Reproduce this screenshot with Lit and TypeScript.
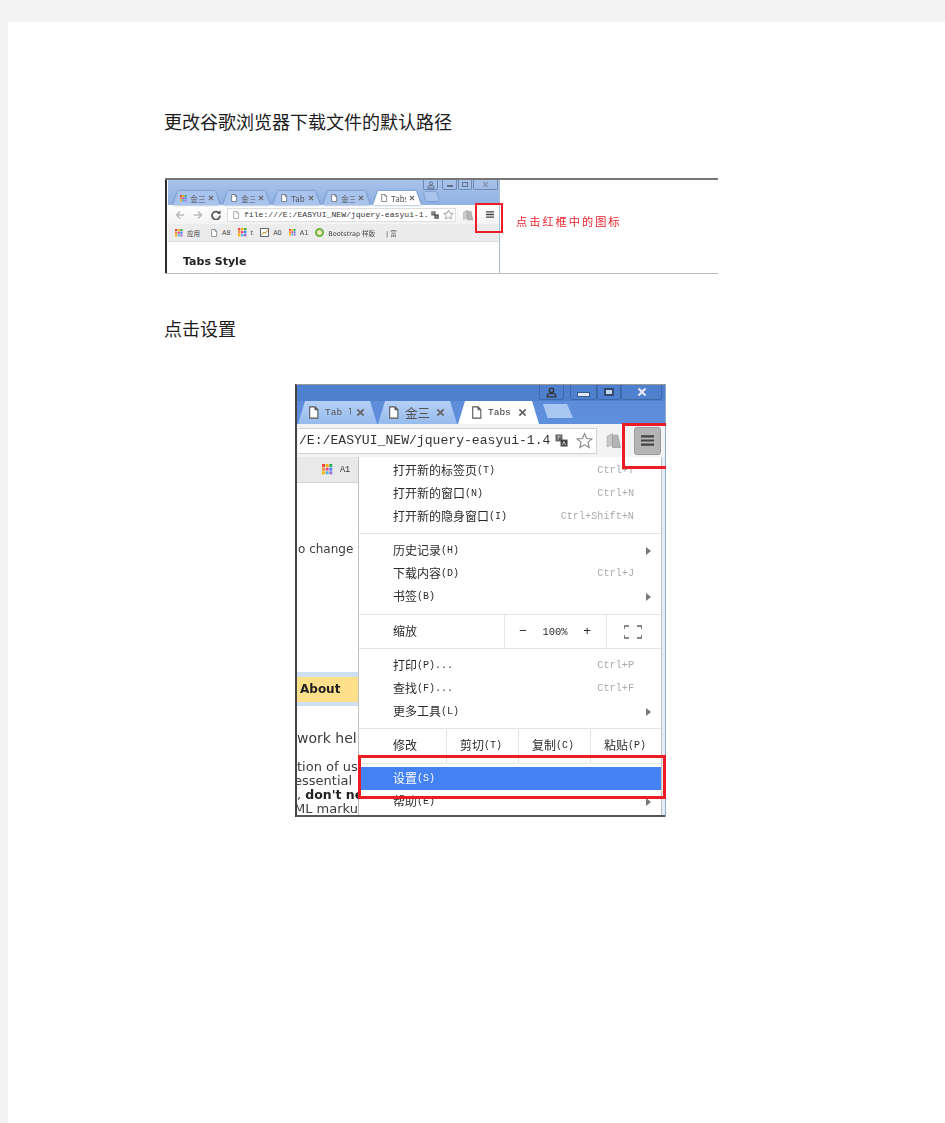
import { LitElement, html, css, svg } from "lit";
import { customElement } from "lit/decorators.js";

const doc = (s: number, c = "#555") => html`<svg class="ic" width=${s} height=${s} viewBox="0 0 12 12"><path d="M2.5 .8H7.5L10 3.4V11.2H2.5Z M7.5 .8V3.4H10" fill="#fff" stroke=${c} stroke-width="1"/></svg>`;
const x = (s: number, c = "#666") => html`<svg class="ic" width=${s} height=${s} viewBox="0 0 10 10"><path d="M1.5 1.5L8.5 8.5M8.5 1.5L1.5 8.5" stroke=${c} stroke-width="2"/></svg>`;
const COLORS = ["#e8453c","#f4b400","#34a853","#f58b2a","#e84a8a","#4285f4","#f4b400","#4db6e8","#a06cd5"];
const grid = (s: number) => html`<svg class="ic" width=${s} height=${s} viewBox="0 0 9 9">${COLORS.map((c, i) => svg`<rect x=${(i % 3) * 3} y=${Math.floor(i / 3) * 3} width="2.4" height="2.4" fill=${c}/>`)}</svg>`;
const star = (s: number) => html`<svg class="ic" width=${s} height=${s} viewBox="0 0 16 16"><path d="M8 1.5L10 6.1L15 6.5L11.2 9.8L12.4 14.7L8 12.1L3.6 14.7L4.8 9.8L1 6.5L6 6.1Z" fill="#fff" stroke="#8a8a8a" stroke-width="1.1"/></svg>`;
const burger = (w: number, h: number) => html`<svg class="ic" width=${w} height=${h} viewBox="0 0 12 10"><path d="M0 1.2H12M0 5H12M0 8.8H12" stroke="#444" stroke-width="1.9"/></svg>`;
const books = (s: number) => html`<svg class="ic" width=${s} height=${s} viewBox="0 0 16 16"><path d="M2 14V4L7 1.5V12Z" fill="#c9c9c9" stroke="#aaa" stroke-width=".7"/><path d="M7 3H12L14.5 14.5H7Z" fill="#b5b5b5" stroke="#999" stroke-width=".7"/></svg>`;
const trans = (s: number) => html`<svg class="ic" width=${s} height=${s} viewBox="0 0 14 14"><rect x=".5" y=".5" width="7.5" height="7.5" fill="#666"/><rect x="6" y="6" width="7.5" height="7.5" fill="#444"/><path d="M2.5 2.5H6M4 2.5L3 6" stroke="#ddd" stroke-width=".8"/><path d="M8 12L9.7 8L11.5 12" stroke="#eee" stroke-width=".8" fill="none"/></svg>`;
const user = (s: number, c: string) => html`<svg class="ic" width=${s} height=${s} viewBox="0 0 12 12"><circle cx="6" cy="3.6" r="2.4" fill="none" stroke=${c} stroke-width="1.5"/><path d="M1.5 10.8V9C1.5 7.6 3 7 6 7S10.5 7.6 10.5 9V10.8Z" fill="none" stroke=${c} stroke-width="1.5"/></svg>`;

type Row = { t: string; k: string; sc?: string; arrow?: boolean; cls?: string };
const G1: Row[] = [
  { t: "打开新的标签页", k: "(T)", sc: "Ctrl+T" },
  { t: "打开新的窗口", k: "(N)", sc: "Ctrl+N" },
  { t: "打开新的隐身窗口", k: "(I)", sc: "Ctrl+Shift+N" },
];
const G2: Row[] = [
  { t: "历史记录", k: "(H)", arrow: true },
  { t: "下载内容", k: "(D)", sc: "Ctrl+J" },
  { t: "书签", k: "(B)", arrow: true },
];
const G3: Row[] = [
  { t: "打印", k: "(P)...", sc: "Ctrl+P" },
  { t: "查找", k: "(F)...", sc: "Ctrl+F" },
  { t: "更多工具", k: "(L)", arrow: true },
];
const G4: Row[] = [
  { t: "设置", k: "(S)", cls: "hl" },
  { t: "帮助", k: "(E)", arrow: true },
];

@customElement("app-root")
export class AppRoot extends LitElement {
  static styles = css`
    :host { display: block; box-sizing: border-box; height: 1123px; padding: 22px 0 0 8px; background: #f3f3f3; overflow: hidden;
      font-family: "Noto Sans CJK SC", sans-serif; }
    * { box-sizing: border-box; }
    .ic { display: block; flex: none; }
    .sheet { height: 1101px; background: #fff; padding: 86px 0 0 156px; }
    h1, .p { margin: 0; font-weight: 400; font-size: 18px; line-height: 26px; color: #1c1c1c; }
    .p { margin-top: 41px; }

    /* first picture */
    .pic1 { position: relative; margin: 44px 0 0 1px; width: 553px; height: 96px; display: flex; border-top: 2px solid #777; border-bottom: 1px solid #bbb; filter: blur(.4px); }
    .b1 { width: 335px; display: flex; flex-direction: column; border-left: 2px solid #2a2a2a; border-right: 1px solid #a9bdd8; padding-left: 1px; }
    .c1 { height: 25px; background: linear-gradient(#a9c3ea, #8fb1e4); display: flex; flex-direction: column; }
    .wc1 { height: 11px; display: flex; justify-content: flex-end; padding-right: 1px; }
    .wc1 div { height: 10px; border: 1px solid #7089b0; border-top: 0; border-radius: 0 0 2px 2px; display: flex; align-items: center; justify-content: center; margin-left: 1px; color: #6b7d99; }
    .w-u { width: 15px; margin-right: 3px; }
    .w-m { width: 15px; } .w-m i { display: block; width: 6px; height: 2px; background: #5f6f88; margin-top: 3px; }
    .w-a { width: 14px; } .w-a i { display: block; width: 6px; height: 5px; border: 1px solid #5f6f88; }
    .w-c { width: 25px; }
    .tabs1 { flex: 1; display: flex; gap: 3px; padding-left: 5px; filter: drop-shadow(0 0 .8px #5a7bb0); }
    .tab1 { width: 47px; background: #a8c4ee; clip-path: polygon(0 100%, 5px 0, calc(100% - 5px) 0, 100% 100%); display: flex; align-items: center; gap: 3px; padding: 0 6px 0 7px; font: 8px "Noto Sans CJK SC", sans-serif; color: #555; white-space: nowrap; }
    .tab1 span { flex: 1; overflow: hidden; }
    .tab1.on { background: #fff; width: 48px; }
    .new1 { width: 15px; height: 9px; margin-top: 1px; background: #a8c4ee; clip-path: polygon(0 0, 80% 0, 100% 100%, 15% 100%); }
    .tb1 { height: 19px; background: linear-gradient(#fff, #f3f3f3); display: flex; align-items: center; }
    .nav1 { display: flex; align-items: center; gap: 8px; padding-left: 7px; width: 59px; }
    .url1 { width: 229px; height: 14px; background: #fff; border: 1px solid #ddd; display: flex; align-items: center; padding: 0 1px 0 4px; font: 8.1px "Liberation Mono", monospace; color: #333; white-space: nowrap; overflow: hidden; gap: 4px; }
    .url1 span { flex: 1; overflow: hidden; }
    .tb1 .bk { margin: 0 0 0 6px; }
    .tb1 .bg { margin-left: 12px; }
    .bm1 { height: 18px; background: #ececec; border-bottom: 1px solid #ddd; display: flex; align-items: center; padding-left: 7px; font: 6.5px "DejaVu Sans", "Noto Sans CJK SC", sans-serif; color: #444; white-space: nowrap; }
    .bm1 span { margin: 0 7px 0 4px; }
    .bm1 span:first-of-type { margin-right: 10px; }
    .bs { width: 9px; height: 9px; border-radius: 50%; border: 2px solid #6cb33f; background: #f5e9b8; flex: none; }
    .ct1 { flex: 1; background: #fff; padding: 13px 0 0 15px; font: 700 11px/14px "DejaVu Sans", sans-serif; color: #222; }
    .cap1 { flex: 1; display: flex; align-items: center; padding: 0 0 11px 16px; font-size: 11.2px; letter-spacing: 2px; color: #e8202a; white-space: nowrap; }
    .r1 { position: absolute; left: 310px; top: 23px; width: 28px; height: 30px; border: 2px solid #ee1c25; }

    /* second picture */
    .pic2 { position: relative; margin: 43px 0 0 131px; width: 371px; height: 433px; display: flex; flex-direction: column; background: #5a8ad6; border-top: 1px solid #999; border-left: 2px solid #444; border-right: 1px solid #8eaad6; filter: blur(.3px); }
    .wc2 { height: 16px; background: #4f80ce; display: flex; justify-content: flex-end; padding-right: 3px; flex: none; }
    .wc2 div { height: 15px; border: 1px solid #3d68aa; border-top: 0; border-radius: 0 0 3px 3px; display: flex; align-items: center; justify-content: center; }
    .w2u { width: 25px; margin-right: 6px; }
    .w2m { width: 27px; } .w2m i { display: block; width: 11px; height: 3px; background: #dfe8f5; margin-top: 4px; outline: 1px solid #3a5a8c; }
    .w2a { width: 24px; } .w2a i { display: block; width: 10px; height: 8px; border: 2px solid #334a6e; background: #c6d6ee; }
    .w2c { width: 41px; color: #fff; }
    .tabs2 { height: 23px; flex: none; display: flex; gap: 1px; padding-left: 1px; background: linear-gradient(#5d8cd9, #5f90dd); filter: drop-shadow(0 0 .5px #3b66ab); }
    .tab2 { width: 79px; background: linear-gradient(#b4d0f5, #97bbed); clip-path: polygon(0 100%, 7px 0, calc(100% - 7px) 0, 100% 100%); display: flex; align-items: center; padding: 0 12px 0 9px; gap: 5px; color: #555; white-space: nowrap; font-size: 12.5px; }
    .tab2 span { flex: 1; overflow: hidden; }
    .tab2.m { font: 9.5px "Liberation Mono", monospace; }
    .tab2.on { background: #fff; width: 81px; padding-left: 12px; font: 9.5px "Liberation Mono", monospace; color: #333; }
    .new2 { width: 30px; height: 14px; margin: 3px 0 0 3px; background: #a8c8f2; clip-path: polygon(0 0, 80% 0, 100% 100%, 15% 100%); }
    .tb2 { height: 33px; flex: none; background: #f3f3f3; display: flex; align-items: center; }
    .url2 { margin-left: 1px; width: 299px; height: 26px; background: #fff; border: 1px solid #d2d2d2; border-left: 0; display: flex; align-items: center; padding-right: 3px; font: 13.1px "Liberation Mono", monospace; color: #333; white-space: nowrap; overflow: hidden; }
    .url2 span { flex: 1; overflow: hidden; margin-left: 1px; }
    .url2 .ic:last-child { margin-left: 8px; }
    .tb2 .bk { margin: 0 0 0 8px; }
    .mb { margin-left: 12px; width: 27px; height: 28px; border-radius: 3px; background: #b4b4b4; border: 1px solid #999; display: flex; align-items: center; justify-content: center; }
    .body2 { flex: 1; min-height: 0; display: flex; background: #e6edf8; border-bottom: 2px solid #555; }
    .lft { width: 61px; flex: none; background: #fff; overflow: hidden; white-space: nowrap; font: 12.5px/14px "DejaVu Sans", sans-serif; color: #3c3c3c; display: flex; flex-direction: column; }
    .bm2 { height: 26px; flex: none; background: #e9e9e9; border-bottom: 1px solid #d5d5d5; display: flex; align-items: center; padding-left: 25px; gap: 7px; font: 8.5px "Liberation Mono", monospace; color: #333; }
    .l1 { margin-top: 57px; font-size: 12px; line-height: 18px; padding-left: 1px; }
    .ab { margin-top: 114px; height: 34px; flex: none; border-top: 5px solid #cfe0f5; border-bottom: 4px solid #cfe0f5; background: #ffe08a; padding-left: 3px; font: 700 12px/25px "DejaVu Sans", sans-serif; color: #222; }
    .l2 { margin-top: 23px; font-size: 14px; line-height: 18px; }
    .l3 { margin-top: 13px; font-size: 13px; }
    .l3 b { font-size: 12.5px; font-weight: 700; color: #222; }
    .cut { text-indent: -3px; }
    .menu { width: 304px; flex: none; background: #fff; border-left: 1px solid #c2c2c2; border-right: 1px solid #c2c2c2; font-size: 12px; color: #2a2a2a; display: flex; flex-direction: column; overflow: hidden; }
    .g { display: flex; flex-direction: column; border-bottom: 1px solid #e5e5e5; }
    .g1 { padding: 2px 0 5px; } .g2 { padding: 5px 0 6px; } .g3 { padding: 5px 0 5px; } .g4 { padding-top: 3px; border-bottom: 0; }
    .row { height: 23px; display: flex; align-items: center; padding-left: 34px; }
    .row .tx { flex: 1; white-space: nowrap; display: flex; align-items: center; padding-bottom: 2px; }
    .k { font: 10px/12px "Liberation Mono", monospace; margin-top: 3px; }
    .sc { margin-right: 27px; font: 10.2px "Liberation Mono", monospace; color: #aaa; }
    .ar { margin-right: 10px; width: 0; height: 0; border-left: 5px solid #777; border-top: 4px solid transparent; border-bottom: 4px solid transparent; }
    .row.hl { background: #4481f2; color: #fff; margin-left: 1px; padding-left: 33px; }
    .z { height: 34px; display: grid; grid-template-columns: 145px 102px 1fr; border-bottom: 1px solid #e5e5e5; }
    .z > div { display: flex; align-items: center; }
    .z .a { padding-left: 34px; padding-bottom: 2px; }
    .z .b { border-left: 1px solid #e5e5e5; justify-content: space-between; padding: 0 15px 0 14px; font: 10.5px "Liberation Mono", monospace; }
    .z .b i { font: normal 13px "Liberation Mono", monospace; }
    .z .c { border-left: 1px solid #e5e5e5; padding-left: 17px; }
    .e { height: 35px; display: grid; grid-template-columns: 87px 72px 72px 1fr; border-bottom: 1px solid #e5e5e5; }
    .e > div { display: flex; align-items: center; white-space: nowrap; padding-bottom: 3px; }
    .e .a { padding-left: 34px; }
    .e .t { border-left: 1px solid #e5e5e5; padding-left: 13px; }
    .r2a { position: absolute; left: 325px; top: 38px; width: 44px; height: 46px; border: 3px solid #ed1c24; border-right: 0; }
    .r2b { position: absolute; left: 61px; top: 370px; width: 308px; height: 44px; border: 3px solid #ed1c24; }
  `;

  private row(r: Row) {
    return html`<div class="row ${r.cls ?? ""}">
      <div class="tx">${r.t}<span class="k">${r.k}</span></div>
      ${r.sc ? html`<div class="sc">${r.sc}</div>` : ""}
      ${r.arrow ? html`<div class="ar"></div>` : ""}
    </div>`;
  }

  private pic1() {
    return html`<div class="pic1">
      <div class="b1">
        <div class="c1">
          <div class="wc1">
            <div class="w-u">${user(8, "#5f6f88")}</div>
            <div class="w-m"><i></i></div>
            <div class="w-a"><i></i></div>
            <div class="w-c">${x(7, "#8495b0")}</div>
          </div>
          <div class="tabs1">
            <div class="tab1">${grid(7)}<span>金三</span>${x(6)}</div>
            <div class="tab1">${doc(8)}<span>金三</span>${x(6)}</div>
            <div class="tab1">${doc(8)}<span>Tab</span>${x(6)}</div>
            <div class="tab1">${doc(8)}<span>金三</span>${x(6)}</div>
            <div class="tab1 on">${doc(8)}<span>Tabs</span>${x(6)}</div>
            <div class="new1"></div>
          </div>
        </div>
        <div class="tb1">
          <div class="nav1">
            <svg class="ic" width="10" height="10" viewBox="0 0 10 10"><path d="M9 5H2M5 1.5L1.5 5L5 8.5" fill="none" stroke="#bbb" stroke-width="1.6"/></svg>
            <svg class="ic" width="10" height="10" viewBox="0 0 10 10"><path d="M1 5H8M5 1.5L8.5 5L5 8.5" fill="none" stroke="#bbb" stroke-width="1.6"/></svg>
            <svg class="ic" width="10" height="10" viewBox="0 0 10 10"><path d="M8.5 3.6A4 4 0 1 0 9 5.5" fill="none" stroke="#555" stroke-width="1.7"/><path d="M6 3.8H9.6V.3Z" fill="#555"/></svg>
          </div>
          <div class="url1">${doc(8, "#888")}<span>file:///E:/EASYUI_NEW/jquery-easyui-1.4</span>${trans(8)}${star(11)}</div>
          <div class="bk">${books(12)}</div>
          <div class="bg">${burger(8, 7)}</div>
        </div>
        <div class="bm1">
          ${grid(8)}<span>应用</span>
          ${doc(8, "#666")}<span>A8</span>
          ${grid(9)}<span>t</span>
          <svg class="ic" width="9" height="9" viewBox="0 0 9 9"><rect x=".5" y=".5" width="8" height="8" fill="#fff" stroke="#666"/><path d="M1.5 7L4 4L5.5 5.5L7.5 2" fill="none" stroke="#c77b2a"/></svg><span>A0</span>
          ${grid(7)}<span>A1</span>
          <div class="bs"></div><span>Bootstrap 样版</span><span>| 富</span>
        </div>
        <div class="ct1">Tabs Style</div>
      </div>
      <div class="cap1">点击红框中的图标</div>
      <div class="r1"></div>
    </div>`;
  }

  private pic2() {
    return html`<div class="pic2">
      <div class="wc2">
        <div class="w2u">${user(11, "#333")}</div>
        <div class="w2m"><i></i></div>
        <div class="w2a"><i></i></div>
        <div class="w2c">${x(10, "#eef")}</div>
      </div>
      <div class="tabs2">
        <div class="tab2 m">${doc(13)}<span>Tab l</span>${x(9)}</div>
        <div class="tab2">${doc(13)}<span>金三</span>${x(9)}</div>
        <div class="tab2 on">${doc(13)}<span>Tabs</span>${x(9)}</div>
        <div class="new2"></div>
      </div>
      <div class="tb2">
        <div class="url2"><span>/E:/EASYUI_NEW/jquery-easyui-1.4</span>${trans(13)}${star(17)}</div>
        <div class="bk">${books(17)}</div>
        <div class="mb">${burger(13, 11)}</div>
      </div>
      <div class="body2">
        <div class="lft">
          <div class="bm2">${grid(11)}<span>A1</span></div>
          <div class="l1">o change</div>
          <div class="ab">About</div>
          <div class="l2">work help</div>
          <div class="l3">
            <div>tion of using</div>
            <div class="cut">essential</div>
            <div>, <b>don't need</b></div>
            <div class="cut">ML markup</div>
          </div>
        </div>
        <div class="menu">
          <div class="g g1">${G1.map((r) => this.row(r))}</div>
          <div class="g g2">${G2.map((r) => this.row(r))}</div>
          <div class="z">
            <div class="a">缩放</div>
            <div class="b"><i>−</i><span>100%</span><i>+</i></div>
            <div class="c">
              <svg class="ic" width="18" height="14" viewBox="0 0 18 14"><path d="M0 4V1H5M13 1H18V4M18 10V13H13M5 13H0V10" fill="none" stroke="#666" stroke-width="1.6"/></svg>
            </div>
          </div>
          <div class="g g3">${G3.map((r) => this.row(r))}</div>
          <div class="e">
            <div class="a">修改</div>
            <div class="t">剪切<span class="k">(T)</span></div>
            <div class="t">复制<span class="k">(C)</span></div>
            <div class="t">粘贴<span class="k">(P)</span></div>
          </div>
          <div class="g g4">${G4.map((r) => this.row(r))}</div>
        </div>
      </div>
      <div class="r2a"></div>
      <div class="r2b"></div>
    </div>`;
  }

  render() {
    return html`<div class="sheet">
      <h1>更改谷歌浏览器下载文件的默认路径</h1>
      ${this.pic1()}
      <div class="p">点击设置</div>
      ${this.pic2()}
    </div>`;
  }
}
